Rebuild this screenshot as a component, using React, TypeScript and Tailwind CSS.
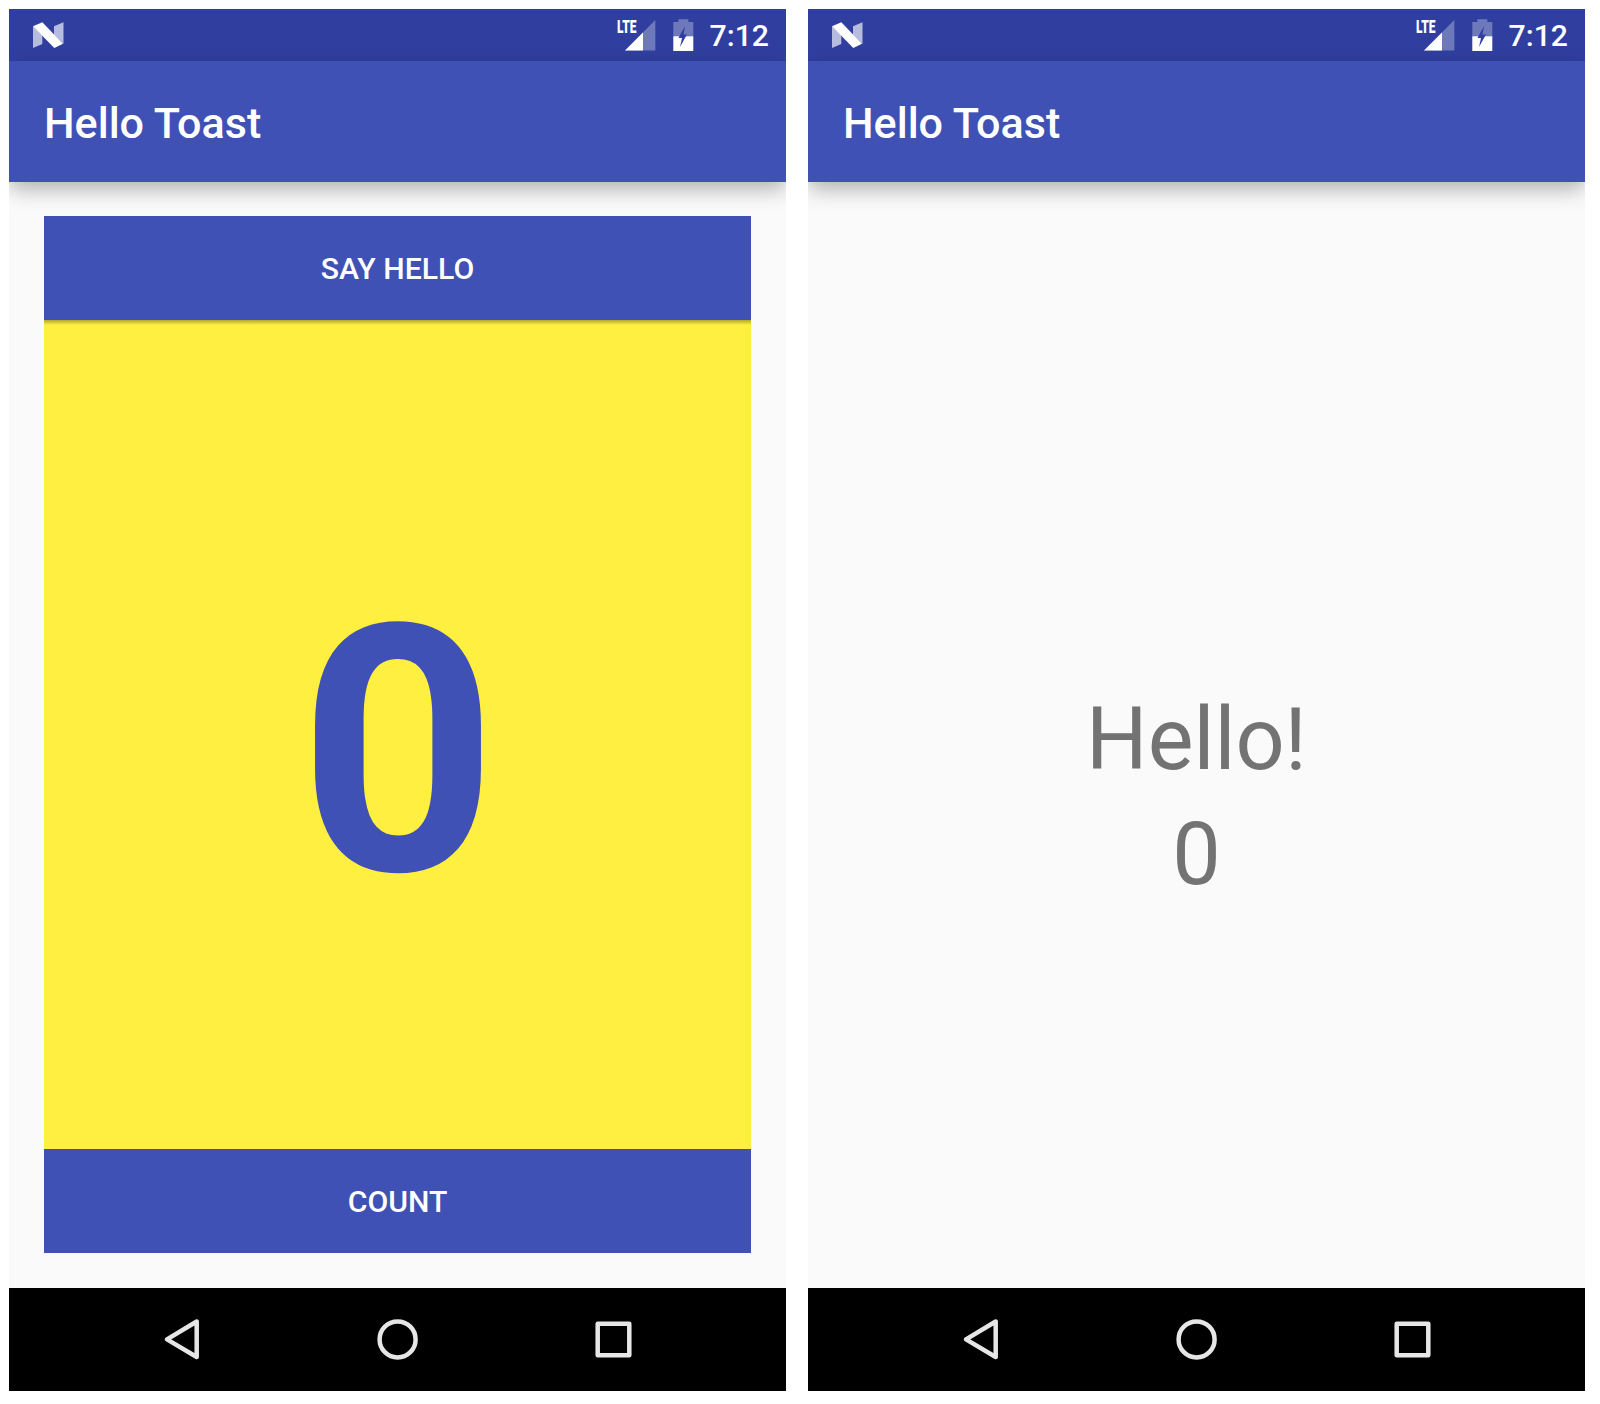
import React from "react";

function NougatIcon() {
  return (
    <svg className="ml-[23px] h-[28px] w-[33px]" viewBox="32 21 33 28" fill="#fff">
      <path d="M33 26.2V48l9.3-4V35z" opacity=".65" />
      <path d="M54 26.2l9.5-3.9V44L54 34.700z" opacity=".65" />
      <path d="M33 26.2l9.3-3.9L63 43.800 54.300 48z" />
    </svg>
  );
}

function SignalIcon() {
  return (
    <div className="relative h-[34px] w-[40px]">
      <svg className="h-full w-full" viewBox="616 18 40 34" fill="#fff">
        <path d="M625 50.500L655.300 20v30.500z" opacity=".3" />
        <path d="M625 50.500L643 32.400v18.100z" />
      </svg>
      <span className="absolute top-[1px] left-[1px] origin-left scale-x-[0.63] text-[19px] leading-[16px] font-black">
        LTE
      </span>
    </div>
  );
}

function BatteryIcon() {
  return (
    <svg className="ml-[16px] h-[34px] w-[22px]" viewBox="672 18 22 34" fill="#fff">
      <path
        d="M673.300 22h5v-2.700h10V22h5v14.300H686l1-1.800h-3.500l1.500-8.500-5.600 10.300h-6.100z"
        opacity=".3"
      />
      <path d="M673.300 36.300h6.100l-.9 1.700h3.500l-2 9 6-10.700h7.300v14.600h-20z" />
    </svg>
  );
}

function StatusBar() {
  return (
    <div className="flex h-[52px] shrink-0 items-center bg-[#303f9f] text-white">
      <NougatIcon />
      <div className="mr-[17px] ml-auto flex items-center">
        <SignalIcon />
        <BatteryIcon />
        <span className="ml-[16px] pt-[2px] text-[30.2px] leading-[50px] font-medium">7:12</span>
      </div>
    </div>
  );
}

function NavBar() {
  return (
    <div className="flex h-[103px] shrink-0 items-center bg-black">
      <svg
        className="h-[103px] w-[777px]"
        viewBox="9 1288 777 103"
        fill="none"
        stroke="#e6e6e6"
        strokeWidth="4.500"
        strokeLinejoin="round"
      >
        <path d="M196.700 1321.500v35.500L167 1339.400z" />
        <circle cx="397.600" cy="1339.400" r="18" />
        <rect x="597.700" y="1323.700" width="31.600" height="31.600" />
      </svg>
    </div>
  );
}

function Phone({ children }: { children: React.ReactNode }) {
  return (
    <section className="flex h-[1382px] w-[777px] flex-col overflow-hidden bg-[#fafafa]">
      <StatusBar />
      <header className="flex h-[121px] shrink-0 items-center bg-[#3f51b5] pt-1 pl-[35px] text-[43.1px] font-medium text-white shadow-[0_8px_20px_-1px_rgba(0,0,0,0.3)]">
        <h1 className="leading-none">Hello Toast</h1>
      </header>
      <main className="flex min-h-0 flex-1 flex-col">{children}</main>
      <NavBar />
    </section>
  );
}

function WideButton({ children }: { children: React.ReactNode }) {
  return (
    <button className="h-[104px] w-full shrink-0 bg-[#3f51b5] pt-[2px] text-[30.2px] font-medium text-white">
      {children}
    </button>
  );
}

export default function App() {
  return (
    <div className="flex h-[1404px] w-[1600px] gap-[22px] bg-white pt-[9px] pl-[9px] font-[Roboto,sans-serif]">
      <Phone>
        <div className="mx-[35px] mt-[34px] mb-[35px] flex flex-1 flex-col">
          <WideButton>SAY HELLO</WideButton>
          <div className="relative flex flex-1 items-center justify-center bg-[#ffef41] pt-[36px] pl-px text-[345.3px] leading-none font-bold text-[#3f51b5]">
            <div className="absolute top-0 left-0 h-[5px] w-full bg-linear-to-b from-black/30 to-transparent" />
            <span>0</span>
          </div>
          <WideButton>COUNT</WideButton>
        </div>
      </Phone>
      <Phone>
        <div className="flex flex-1 flex-col items-center justify-center pt-[123px] text-[86.3px] leading-[115px] text-[#737373]">
          <p>Hello!</p>
          <p>0</p>
        </div>
      </Phone>
    </div>
  );
}
